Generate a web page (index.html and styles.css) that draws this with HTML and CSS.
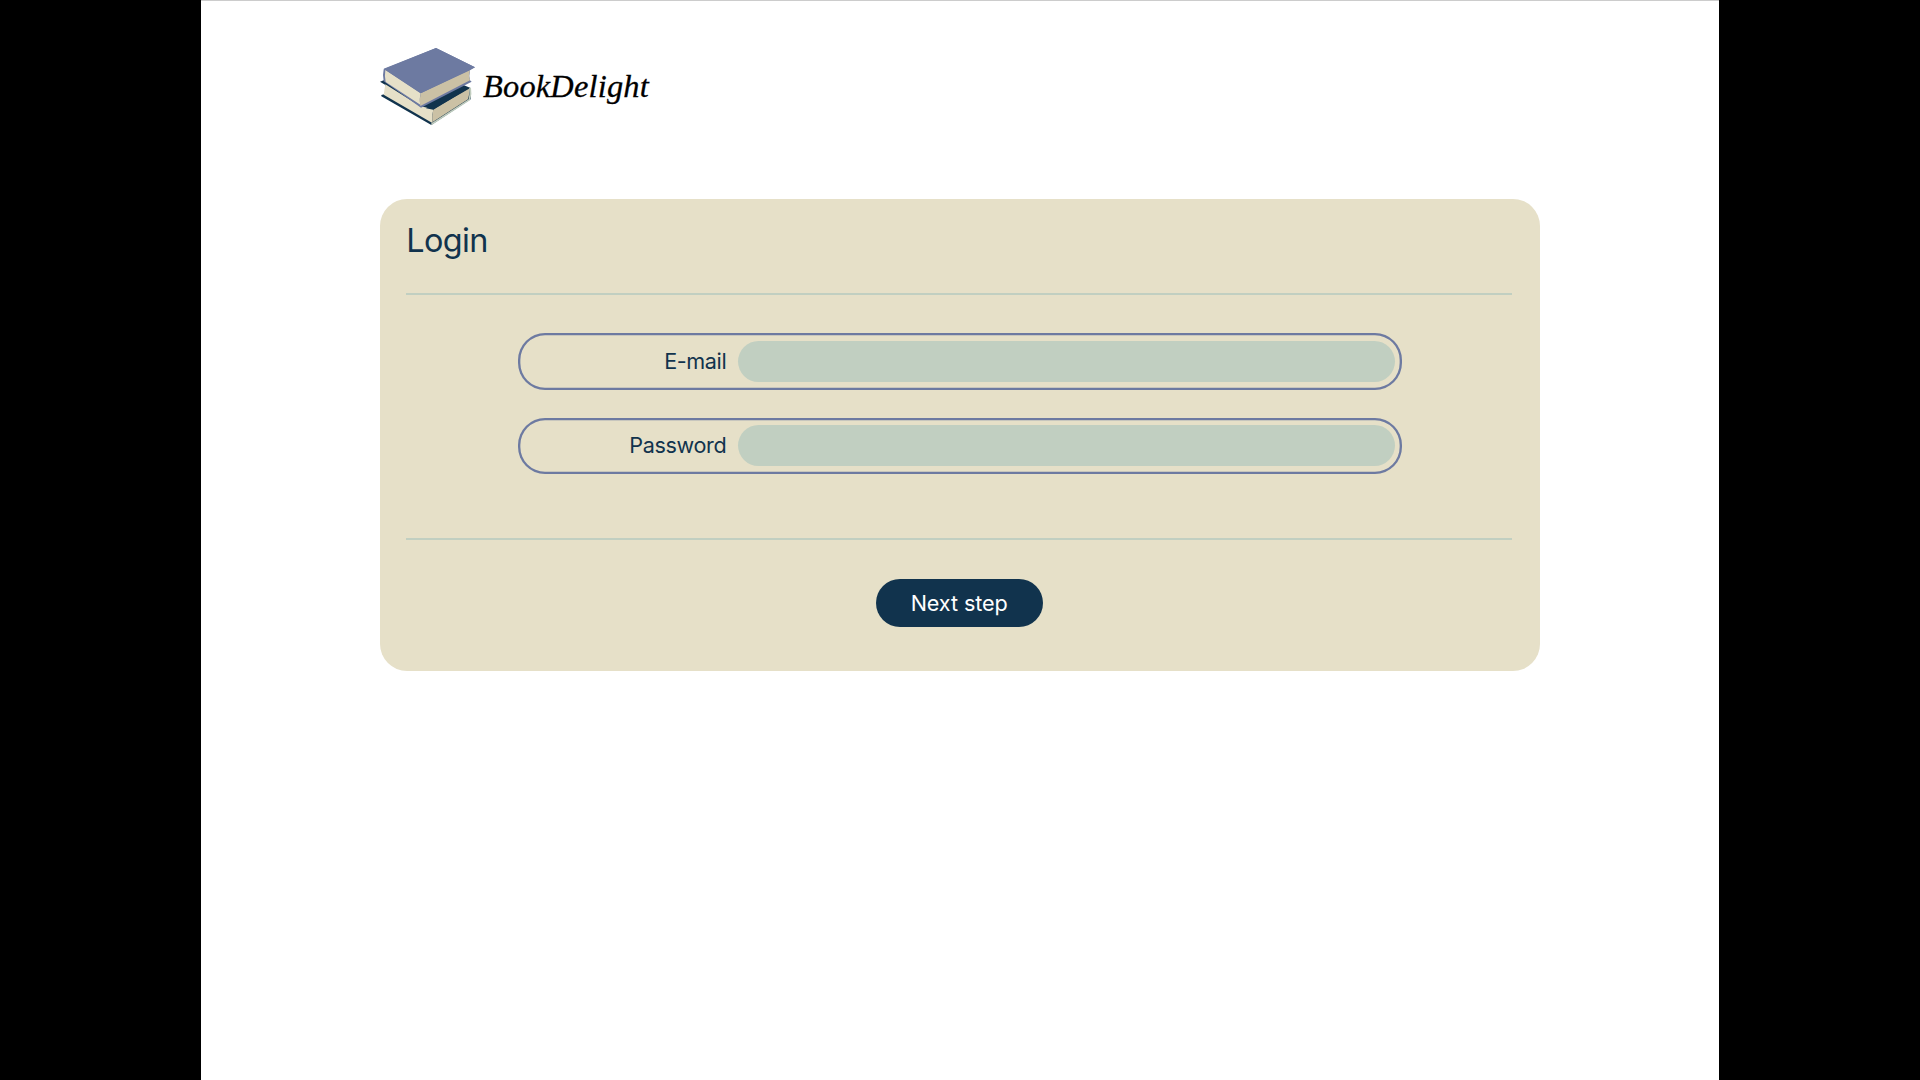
FILE: index.html
```html
<!DOCTYPE html>
<html lang="en">
<head>
<meta charset="utf-8">
<title>BookDelight – Login</title>
<link rel="stylesheet" href="styles.css">
</head>
<body>
<div class="page">
  <header class="brand">
    <svg class="brand-logo" viewBox="30 21 285 240" aria-hidden="true">
      <path fill="#11334d" d="M30 125L45 119L160 190L280 135L302 144L302 178L184 255L34 169L34 165L45 162L45 134Z"/>
      <path fill="#c1cdbf" d="M184 250L296 178Q300 160 297 145L303 143Q307 162 300 181L184 256Z"/>
      <path fill="#e6e0c8" d="M46 133L150 198L190 208Q185 228 187 249L41 164Z"/>
      <path fill="#cbc1a5" d="M190 208L297 146Q300 162 294 178L187 247Q185 228 190 208Z"/>
      <path fill="#11334d" d="M168 205L190 209L296 145L275 136Z"/>
      <path fill="#6d7aa1" d="M41 88L198 24L315 82L300 91Q296 108 300 121L305 125L153 203L41 124Q37 105 41 88Z"/>
      <path fill="#e6e0c8" d="M46 90L152 160Q147 180 151 194L47 126Q43 107 46 90Z"/>
      <path fill="#cbc1a5" d="M152 160L300 91Q295 108 300 121L151 198Q147 180 152 160Z"/>
      <path fill="#6d7aa1" d="M41 86L198 24L315 82L152 160Z"/>
    </svg>
    <span class="brand-name">BookDelight</span>
  </header>
  <main class="card">
    <h1 class="card-title">Login</h1>
    <form class="fields">
      <label class="field"><span class="field-label">E-mail</span><input class="field-input" type="email"></label>
      <label class="field"><span class="field-label">Password</span><input class="field-input" type="password"></label>
    </form>
    <button class="next" type="button">Next step</button>
  </main>
</div>
</body>
</html>
```
FILE: styles.css
```css
* { box-sizing: border-box; }
body {
  margin: 0;
  background: #000;
  font-family: Inter, sans-serif;
  color: #11334d;
}
.page {
  width: 1518.5px;
  min-height: 1080px;
  margin-left: 200.5px;
  padding: 46px 179.5px 0 179px;
  background: #fff;
  border-top: 1px solid #ccc;
}
.brand {
  display: flex;
  height: 80px;
  margin-bottom: 71.5px;
}
.brand-logo {
  width: 95px;
  height: 80px;
}
.brand-name {
  margin-left: 8.5px;
  font: italic 32.4px/78px "Liberation Serif", serif;
  letter-spacing: 0.2px;
  color: #000;
  -webkit-text-stroke: 0.3px #000;
}
.card {
  height: 472.5px;
  padding: 21.5px 27.5px 0 26.8px;
  border-radius: 27px;
  background: #e6e0c8;
}
.card-title {
  height: 72.5px;
  margin: 0;
  font-size: 32.4px;
  font-weight: 400;
  line-height: 41.5px;
  letter-spacing: -0.65px;
}
.fields {
  display: flex;
  flex-direction: column;
  align-items: center;
  gap: 28px;
  height: 247.5px;
  padding: 38.5px 0 0 1.2px;
  border: solid #c1cfc1;
  border-width: 2px 0;
}
.field {
  display: flex;
  align-items: center;
  width: 884px;
  height: 56.5px;
  padding-right: 7px;
  border-radius: 27px;
  box-shadow: inset 0 0 0 2.35px #6d7aa1;
}
.field-label {
  width: 208.6px;
  margin-right: 11.4px;
  padding-bottom: 1px;
  text-align: right;
  font-size: 21.6px;
  letter-spacing: -0.37px;
}
.field-input {
  flex: 1;
  min-width: 0;
  height: 41px;
  padding: 0 20px;
  border: 0;
  border-radius: 21px;
  background: #c1cfc1;
  font: inherit;
}
.next {
  display: block;
  width: 167px;
  height: 48px;
  margin: 39px auto 0;
  padding: 0;
  border: 0;
  border-radius: 24px;
  background: #11334d;
  color: #fff;
  font: 21.6px Inter, sans-serif;
  letter-spacing: -0.1px;
}
```
